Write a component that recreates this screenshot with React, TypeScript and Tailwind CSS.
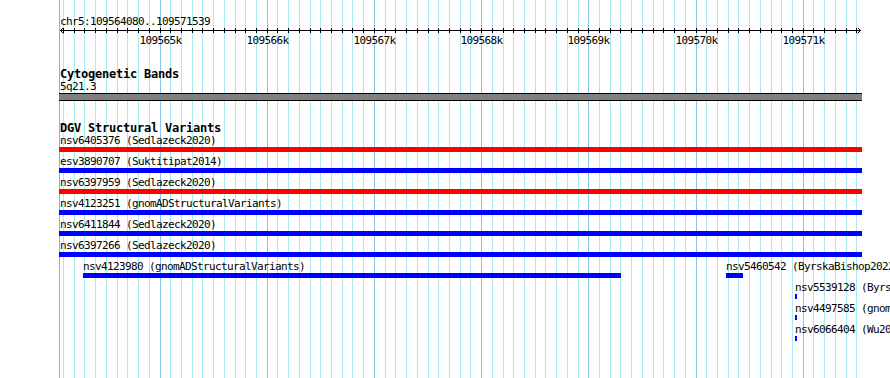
import React from 'react';

const START = 109564080;
const END = 109571539;

// genome coordinate -> page x
const toX = (bp: number) => 60.9 + (bp - START) * 0.1072;

const gridStops: number[] = [];
for (let bp = 109564100; bp <= 109571500; bp += 100) gridStops.push(bp);

interface Feature {
  id: string;
  source: string;
  color: 'red' | 'blue';
}

const stacked: Feature[] = [
  { id: 'nsv6405376', source: 'Sedlazeck2020', color: 'red' },
  { id: 'esv3890707', source: 'Suktitipat2014', color: 'blue' },
  { id: 'nsv6397959', source: 'Sedlazeck2020', color: 'red' },
  { id: 'nsv4123251', source: 'gnomADStructuralVariants', color: 'blue' },
  { id: 'nsv6411844', source: 'Sedlazeck2020', color: 'blue' },
  { id: 'nsv6397266', source: 'Sedlazeck2020', color: 'blue' },
];

// packed rows: [left, barWidth, label]
const packed: { left: number; width: number; label: string }[][] = [
  [
    { left: 83, width: 538, label: 'nsv4123980 (gnomADStructuralVariants)' },
    { left: 726, width: 17, label: 'nsv5460542 (ByrskaBishop2022)' },
  ],
  [{ left: 795, width: 2, label: 'nsv5539128 (ByrskaBishop2022)' }],
  [{ left: 795, width: 2, label: 'nsv4497585 (gnomADStructuralVariants)' }],
  [{ left: 795, width: 2, label: 'nsv6066404 (Wu2021)' }],
];

function GridLines() {
  return (
    <svg className="absolute left-0 top-0" width={890} height={378}>
      <line x1={59.5} y1={0} x2={59.5} y2={378} stroke="#7fb6e0" strokeWidth={1} />
      {gridStops.map((bp) => {
        const x = Math.round(toX(bp)) + 0.5;
        return (
          <line
            key={bp}
            x1={x}
            y1={0}
            x2={x}
            y2={378}
            stroke={bp % 1000 === 0 ? '#86c6ea' : '#a8eaf0'}
            strokeWidth={1}
          />
        );
      })}
    </svg>
  );
}

function Ruler() {
  return (
    <>
      <svg className="block" width={890} height={6}>
        <line x1={60} y1={2.5} x2={861} y2={2.5} stroke="#000" strokeWidth={1} />
        {gridStops.map((bp) => {
          const x = Math.round(toX(bp)) + 0.5;
          return <line key={bp} x1={x} y1={0} x2={x} y2={5} stroke="#000" strokeWidth={1} />;
        })}
        <polyline points="63.5,-0.5 60.5,2.5 63.5,5.5" fill="none" stroke="#000" strokeWidth={1} />
        <polyline points="857.5,-0.5 860.5,2.5 857.5,5.5" fill="none" stroke="#000" strokeWidth={1} />
      </svg>
      <div className="relative h-[13px] leading-[13px]">
        {gridStops
          .filter((bp) => bp % 1000 === 0)
          .map((bp) => (
            <span
              key={bp}
              className="absolute top-0 -translate-x-1/2 whitespace-nowrap"
              style={{ left: Math.round(toX(bp)) + 0.5 }}
            >
              {bp / 1000}k
            </span>
          ))}
      </div>
    </>
  );
}

export default function App() {
  return (
    <div className="relative w-[890px] h-[378px] overflow-hidden bg-white text-black font-['DejaVu_Sans_Mono',monospace] text-[11px] tracking-[-0.62px]">
      <GridLines />
      <div className="relative flex flex-col pt-[15px]">
        <div className="pl-[60px] leading-[13px]">
          chr5:{START}..{END}
        </div>
        <Ruler />

        {/* Cytogenetic bands */}
        <div className="mt-[22px] pl-[60px] font-bold text-[12px] tracking-[-0.22px] leading-[11px]">Cytogenetic Bands</div>
        <div className="pl-[60px] leading-[13px]">5q21.3</div>
        <div className="ml-[59px] w-[803px] h-[8px] bg-[#808080] border-y border-black" />

        {/* DGV */}
        <div className="mt-[22px] pl-[60px] font-bold text-[12px] tracking-[-0.22px] leading-[11px]">DGV Structural Variants</div>
        {stacked.map((f) => (
          <div key={f.id} className="flex flex-col">
            <div className="pl-[60px] leading-[13px] whitespace-nowrap">
              {f.id} ({f.source})
            </div>
            <div
              className={`ml-[59px] w-[803px] h-[5px] mb-[3px] ${f.color === 'red' ? 'bg-[#ff0000]' : 'bg-[#0000ff]'}`}
            />
          </div>
        ))}
        {packed.map((row, i) => (
          <div key={i} className="relative h-[21px]">
            {row.map((f) => (
              <div key={f.label} className="absolute top-0 flex flex-col" style={{ left: f.left }}>
                <div className="leading-[13px] whitespace-nowrap">{f.label}</div>
                <div className="h-[5px] bg-[#0000ff]" style={{ width: f.width }} />
              </div>
            ))}
          </div>
        ))}
      </div>
    </div>
  );
}
